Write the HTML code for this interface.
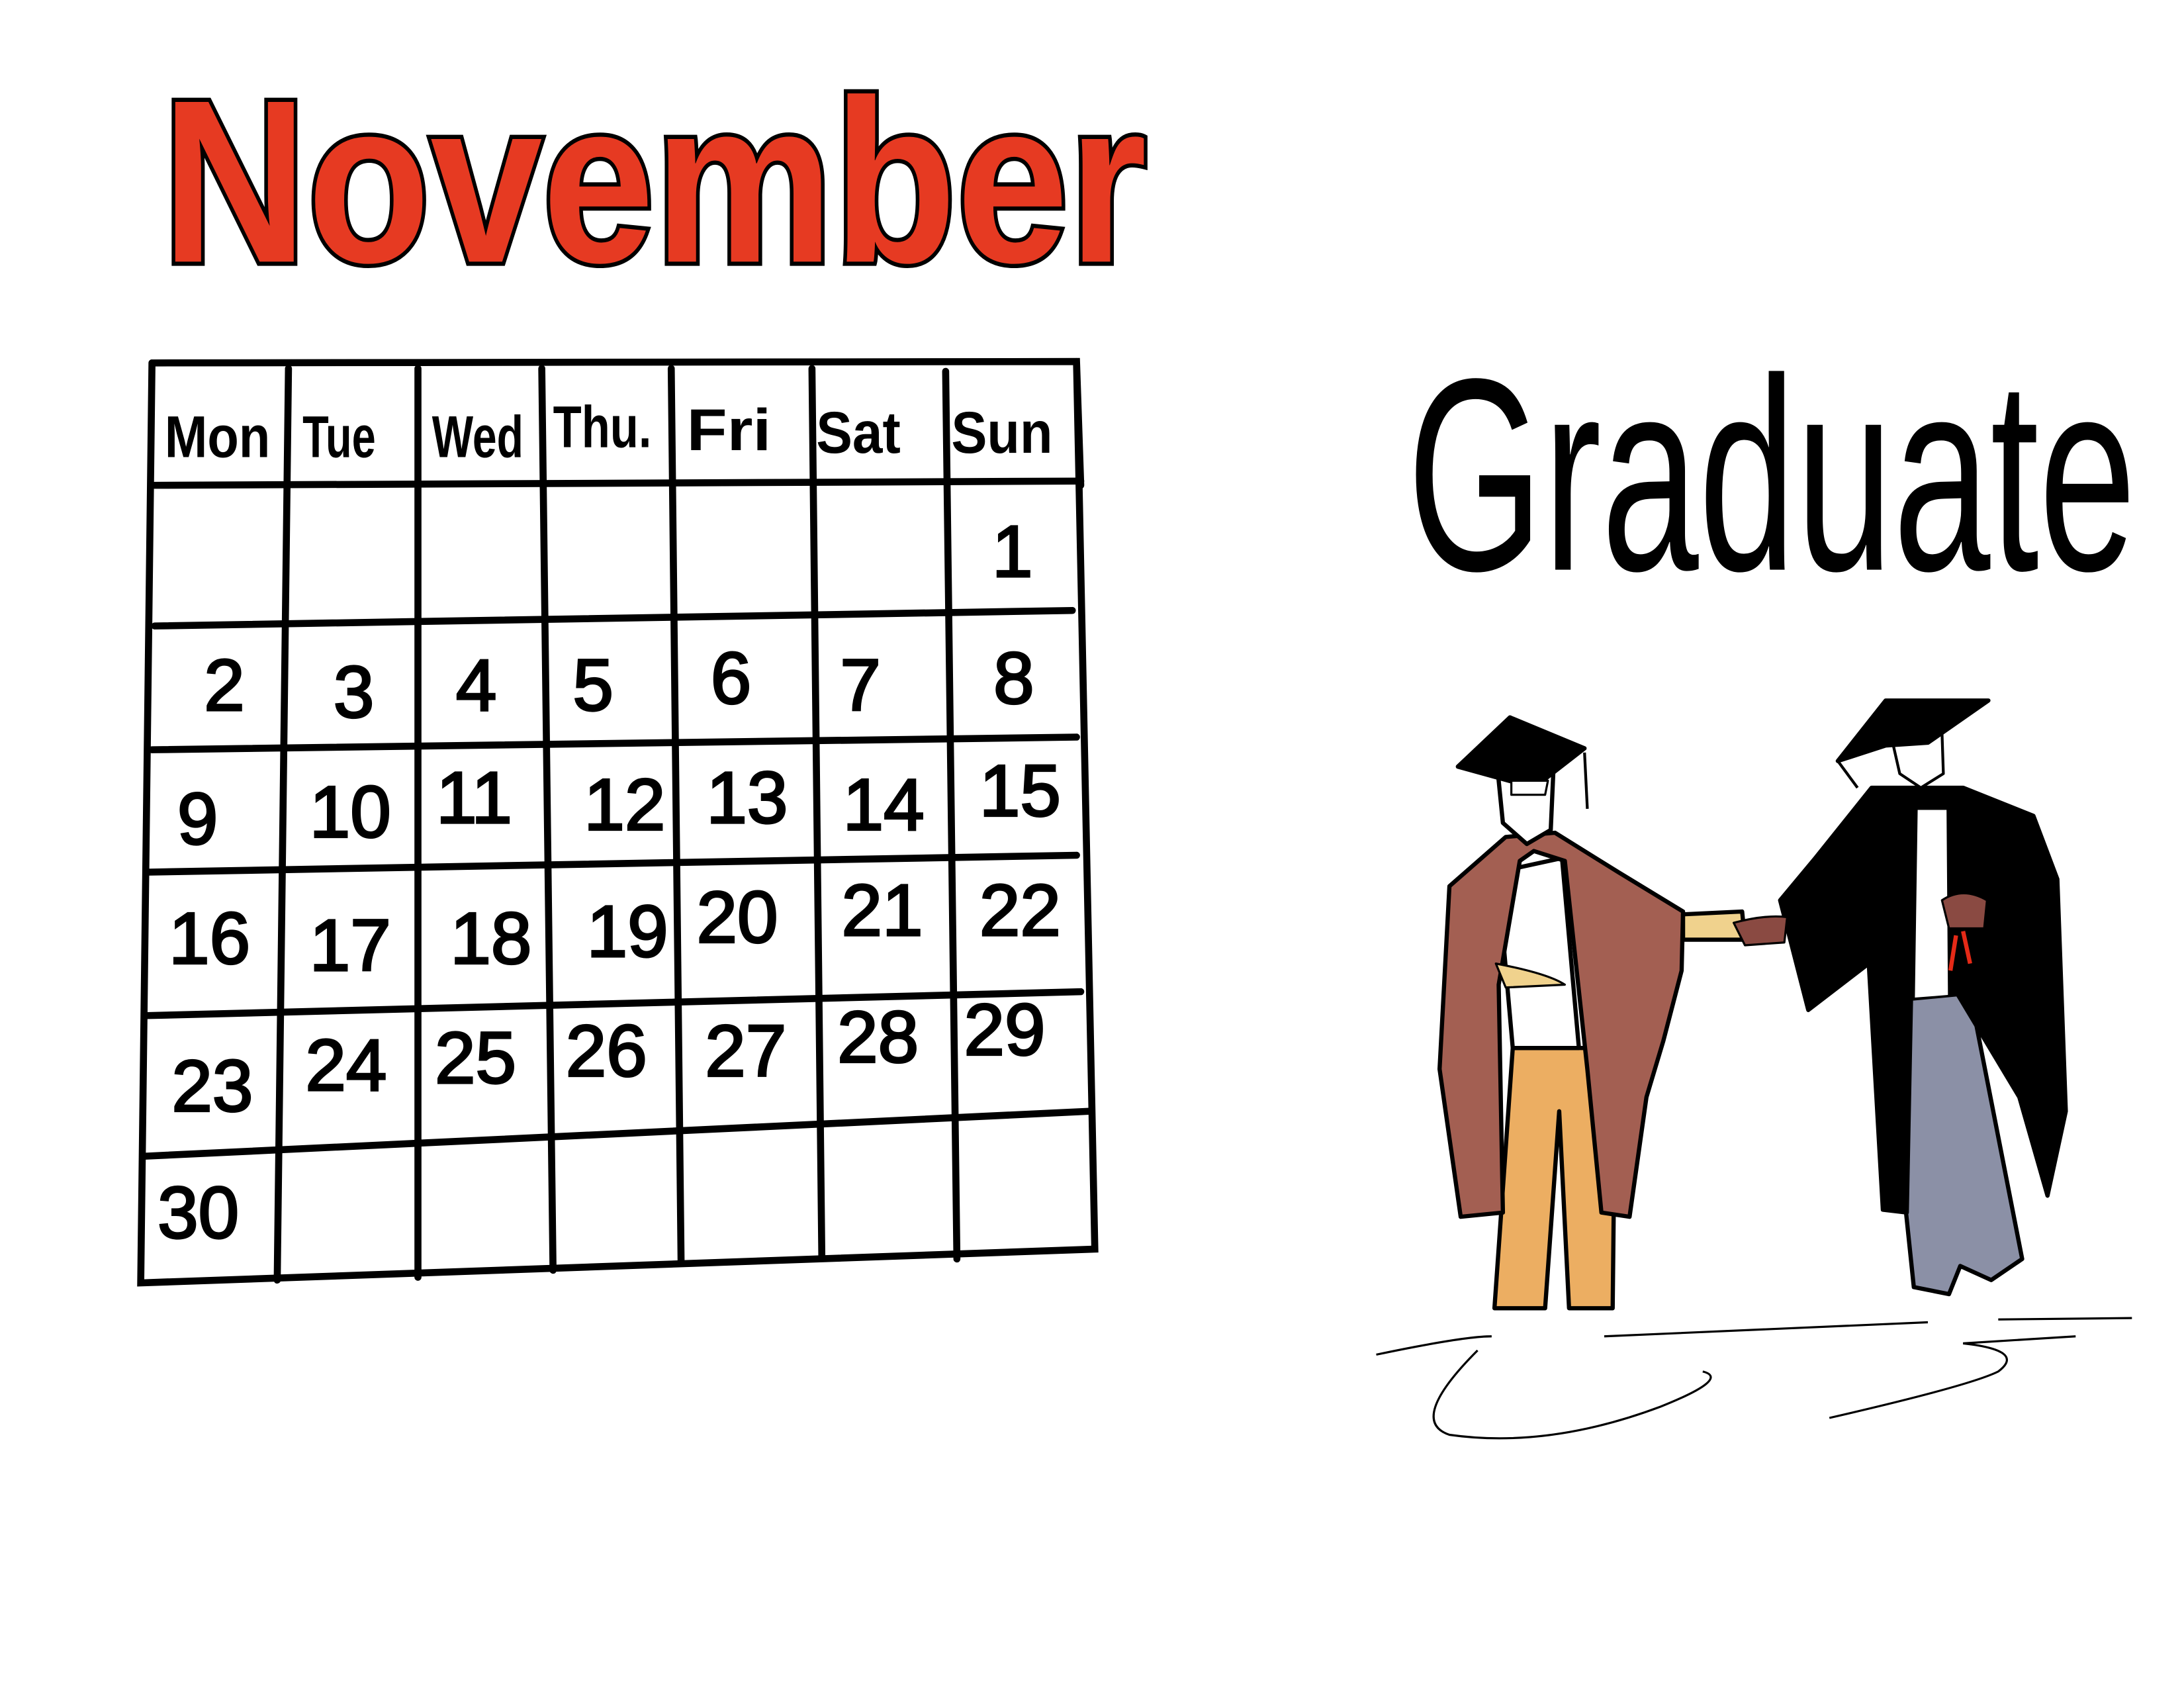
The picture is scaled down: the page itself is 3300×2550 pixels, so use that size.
<!DOCTYPE html>
<html><head><meta charset="utf-8"><style>
html,body{margin:0;padding:0;background:#fff;}
svg{display:block}
</style></head><body>
<svg width="3300" height="2550" viewBox="0 0 1552 1200" preserveAspectRatio="none" xmlns="http://www.w3.org/2000/svg">
<rect width="1552" height="1200" fill="#fff"/>
<text x="115" y="186" font-family="Liberation Sans Narrow, Liberation Sans, sans-serif" font-weight="bold" font-size="165" fill="#e63a22" stroke="#000" stroke-width="6" paint-order="stroke" textLength="700" lengthAdjust="spacingAndGlyphs">November</text>
<text x="1000" y="405" font-family="Liberation Sans Narrow, Liberation Sans, sans-serif" font-size="195" fill="#000" textLength="518" lengthAdjust="spacingAndGlyphs">Graduate</text>
<g stroke="#000" stroke-width="5" fill="none" stroke-linecap="round">
<path d="M108 258 L765 257 L768 345 M108 258 L100 912 L778 888 L765 257"/>
<path d="M110 345 L768 342"/>
<path d="M110 445 L762 434"/>
<path d="M108 533 L765 524"/>
<path d="M106 620 L765 608"/>
<path d="M104 722 L768 705"/>
<path d="M102 822 L774 790"/>
<path d="M205 262 L197 910"/>
<path d="M297 262 L297 908"/>
<path d="M385 262 L393 903"/>
<path d="M477 262 L484 898"/>
<path d="M577 262 L584 893"/>
<path d="M672 264 L680 895"/>
</g>
<g font-family="Liberation Sans Narrow, Liberation Sans, sans-serif" font-size="42" font-weight="bold" fill="#000">
<text x="117" y="325" textLength="75" lengthAdjust="spacingAndGlyphs">Mon</text>
<text x="215" y="325" textLength="52" lengthAdjust="spacingAndGlyphs">Tue</text>
<text x="307" y="325" textLength="65" lengthAdjust="spacingAndGlyphs">Wed</text>
<text x="393" y="318" textLength="70" lengthAdjust="spacingAndGlyphs">Thu.</text>
<text x="488" y="320" textLength="60" lengthAdjust="spacingAndGlyphs">Fri</text>
<text x="580" y="322" textLength="60" lengthAdjust="spacingAndGlyphs">Sat</text>
<text x="676" y="322" textLength="72" lengthAdjust="spacingAndGlyphs">Sun</text>
</g>
<g font-family="Liberation Sans Narrow, Liberation Sans, sans-serif" font-size="52" fill="#000" stroke="#000" stroke-width="1.5">
<text x="705" y="410">1</text>
<text x="145" y="505">2</text><text x="237" y="510">3</text><text x="324" y="505">4</text><text x="407" y="505">5</text><text x="505" y="500">6</text><text x="597" y="505">7</text><text x="706" y="500">8</text>
<text x="126" y="600">9</text><text x="220" y="595">10</text><text x="310" y="585">11</text><text x="415" y="590">12</text><text x="502" y="585">13</text><text x="599" y="590">14</text><text x="696" y="580">15</text>
<text x="120" y="685">16</text><text x="220" y="690">17</text><text x="320" y="685">18</text><text x="417" y="680">19</text><text x="495" y="670">20</text><text x="598" y="665">21</text><text x="696" y="665">22</text>
<text x="122" y="790">23</text><text x="217" y="775">24</text><text x="309" y="770">25</text><text x="402" y="765">26</text><text x="501" y="765">27</text><text x="595" y="755">28</text><text x="685" y="750">29</text>
<text x="112" y="880">30</text>
</g>
<g stroke="#000" stroke-width="1.5" fill="none">
<path d="M978 963 Q1040 950 1060 950 M1140 950 L1370 940 M1420 938 L1515 937 M1300 1008 Q1400 985 1420 975 Q1440 960 1395 955 L1475 950"/>
<path d="M1050 960 Q1000 1010 1030 1020 Q1100 1030 1180 1000 Q1230 980 1210 975"/>
</g>
<g stroke="#000" stroke-width="3" stroke-linejoin="round">
<path d="M1075 745 L1148 745 L1146 930 L1115 930 L1108 790 L1098 930 L1062 930 Z" fill="#ecae62"/>
<path d="M1064 620 L1110 610 L1122 745 L1075 745 Z" fill="#fff"/>
<path d="M1070 595 L1030 630 L1023 760 L1038 865 L1068 862 L1065 700 L1080 612 L1090 605 L1112 612 L1128 760 L1138 862 L1158 865 L1170 780 L1182 740 L1195 690 L1196 648 L1150 620 L1105 592 Z" fill="#a35f52"/>
<path d="M1196 650 L1238 648 L1240 668 L1196 668 Z" fill="#f0d28d"/>
<path d="M1063 685 Q1100 692 1112 700 L1070 702 Z" fill="#f0d28d" stroke-width="1.5"/>
<path d="M1064 545 L1104 545 L1102 590 L1085 600 L1068 585 Z" fill="#fff"/>
<path d="M1036 545 L1073 510 L1126 532 L1090 560 Z" fill="#000"/>
<path d="M1074 555 L1100 555 L1098 565 L1074 565 Z" fill="#fff" stroke-width="1.5"/>
<path d="M1126 535 L1128 575" fill="none" stroke-width="2"/>
</g>
<g stroke="#000" stroke-width="3" stroke-linejoin="round">
<path d="M1358 710 L1400 706 L1437 895 L1415 910 L1393 900 L1385 920 L1360 915 L1348 800 Z" fill="#8b90a6"/>
<path d="M1330 560 L1290 610 L1265 640 L1285 718 L1328 685 L1338 860 L1355 862 L1358 710 L1390 705 L1435 780 L1455 850 L1468 790 L1462 625 L1445 580 L1395 560 Z" fill="#000"/>
<path d="M1362 575 L1384 575 L1385 708 L1360 710 Z" fill="#fff" stroke-width="1.5"/>
<path d="M1232 656 Q1255 650 1270 652 L1268 670 L1240 672 Z" fill="#8a4a42" stroke-width="1.5"/>
<path d="M1380 640 Q1395 630 1412 640 L1410 660 L1385 660 Z" fill="#8a4a42" stroke-width="1.5"/>
<path d="M1390 665 L1386 690 M1395 662 L1400 685" stroke="#e52a17" stroke-width="3" fill="none"/>
<path d="M1345 528 L1380 520 L1381 550 L1365 560 L1350 550 Z" fill="#fff" stroke-width="2"/>
<path d="M1306 541 L1340 498 L1413 498 L1370 528 L1340 530 Z" fill="#000"/>
<path d="M1306 541 L1320 560" fill="none" stroke-width="2"/>
</g>
</svg>
</body></html>
